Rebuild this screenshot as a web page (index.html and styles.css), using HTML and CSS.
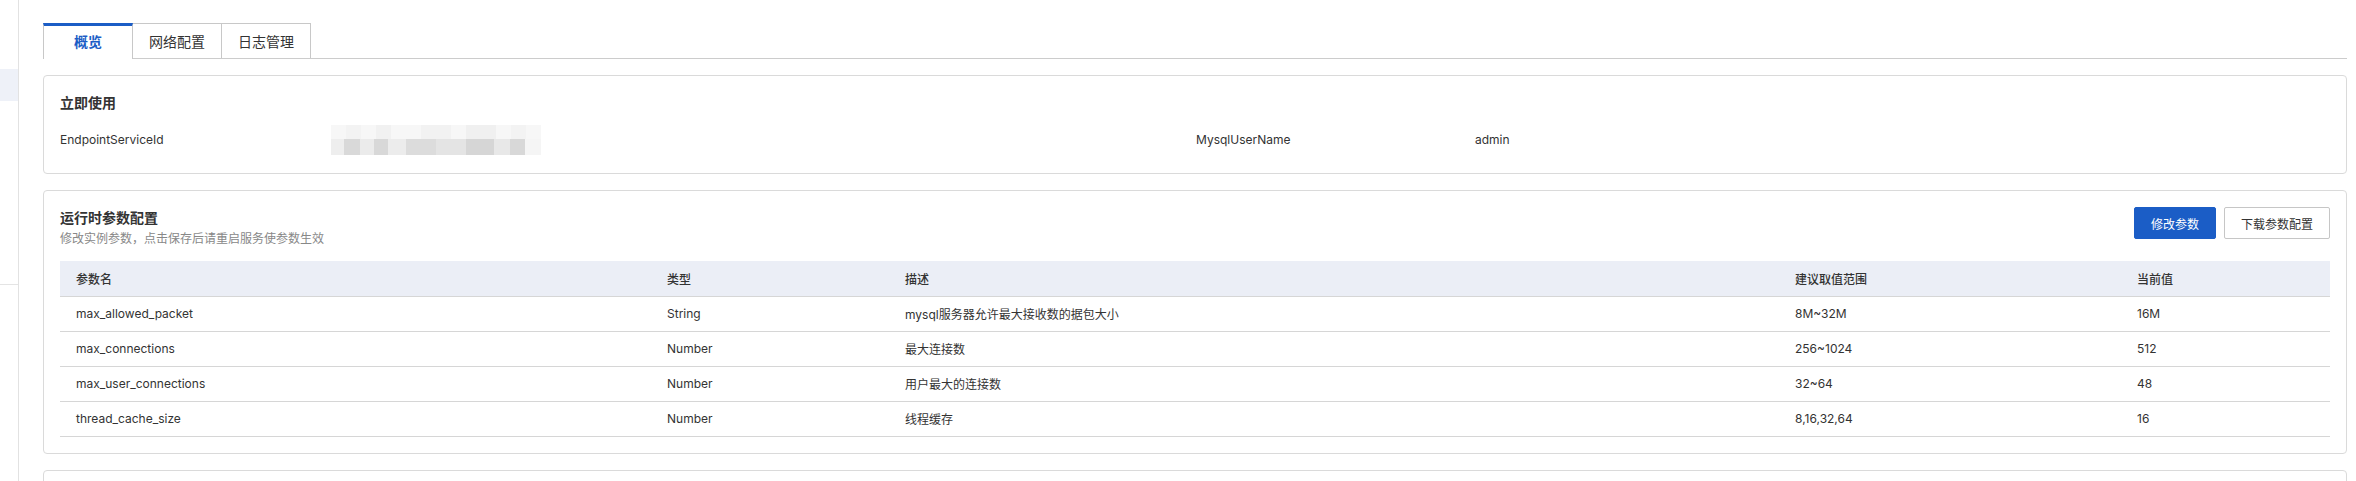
FILE: index.html
```html
<!DOCTYPE html>
<html lang="zh-CN">
<head>
<meta charset="utf-8">
<title>实例详情</title>
<link rel="stylesheet" href="styles.css">
</head>
<body>
<div class="layout">
  <aside class="sidebar">
    <div class="side-active"></div>
    <div class="side-divider"></div>
  </aside>
  <main class="main">
    <nav class="tabs">
      <div class="tab tab-active">概览</div>
      <div class="tab">网络配置</div>
      <div class="tab">日志管理</div>
    </nav>

    <section class="card">
      <h3 class="card-title">立即使用</h3>
      <div class="info-grid">
        <div class="info-label">EndpointServiceId</div>
        <div class="info-value">
          <svg class="masked" width="210" height="30" viewBox="0 0 210 30" aria-hidden="true">
            <rect x="0" y="0" width="210" height="14" fill="#f7f7f7"/>
            <rect x="15" y="0" width="15" height="14" fill="#f3f3f3"/>
            <rect x="45" y="0" width="15" height="14" fill="#f1f1f1"/>
            <rect x="90" y="0" width="30" height="14" fill="#f2f2f2"/>
            <rect x="135" y="0" width="30" height="14" fill="#f0f0f0"/>
            <rect x="180" y="0" width="15" height="14" fill="#f3f3f3"/>
            <rect x="0" y="14" width="210" height="16" fill="#eeeeee"/>
            <rect x="13" y="14" width="16" height="16" fill="#d9d9d9"/>
            <rect x="29" y="14" width="14" height="16" fill="#ebebeb"/>
            <rect x="43" y="14" width="14" height="16" fill="#d8d8d8"/>
            <rect x="57" y="14" width="18" height="16" fill="#ececec"/>
            <rect x="75" y="14" width="30" height="16" fill="#dcdcdc"/>
            <rect x="105" y="14" width="30" height="16" fill="#e4e4e4"/>
            <rect x="135" y="14" width="28" height="16" fill="#d6d6d6"/>
            <rect x="163" y="14" width="16" height="16" fill="#e8e8e8"/>
            <rect x="179" y="14" width="15" height="16" fill="#d8d8d8"/>
            <rect x="194" y="14" width="16" height="16" fill="#f5f5f5"/>
          </svg>
        </div>
        <div class="info-label">MysqlUserName</div>
        <div class="info-value">admin</div>
      </div>
    </section>

    <section class="card">
      <div class="card-head">
        <div>
          <h3 class="card-title">运行时参数配置</h3>
          <p class="card-desc">修改实例参数，点击保存后请重启服务使参数生效</p>
        </div>
        <div class="actions">
          <button class="btn btn-primary">修改参数</button>
          <button class="btn">下载参数配置</button>
        </div>
      </div>
      <table class="params">
        <colgroup>
          <col class="c1"><col class="c2"><col class="c3"><col class="c4"><col class="c5">
        </colgroup>
        <thead>
          <tr><th>参数名</th><th>类型</th><th>描述</th><th>建议取值范围</th><th>当前值</th></tr>
        </thead>
        <tbody>
          <tr><td>max_allowed_packet</td><td>String</td><td>mysql服务器允许最大接收数的据包大小</td><td>8M~32M</td><td>16M</td></tr>
          <tr><td>max_connections</td><td>Number</td><td>最大连接数</td><td>256~1024</td><td>512</td></tr>
          <tr><td>max_user_connections</td><td>Number</td><td>用户最大的连接数</td><td>32~64</td><td>48</td></tr>
          <tr><td>thread_cache_size</td><td>Number</td><td>线程缓存</td><td>8,16,32,64</td><td>16</td></tr>
        </tbody>
      </table>
    </section>

    <section class="card card-empty"></section>
  </main>
</div>
</body>
</html>
```

FILE: styles.css
```css
* { box-sizing: border-box; }

html, body {
  margin: 0;
  padding: 0;
  background: #ffffff;
}

body {
  font-family: Inter, "Noto Sans CJK SC", sans-serif;
  font-size: 12px;
  color: #333333;
}

.layout {
  display: flex;
  min-height: 100vh;
}

.sidebar {
  width: 19px;
  flex: none;
  border-right: 1px solid #e2e2e2;
  padding-top: 69px;
}

.side-active {
  height: 32px;
  background: #eef1f8;
}

.side-divider {
  margin-top: 183px;
  height: 1px;
  background: #e4e4e4;
}

.main {
  flex: 1;
  padding: 23px 9px 0 24px;
}

/* tabs */
.tabs {
  display: flex;
  height: 36px;
  border-bottom: 1px solid #cccccc;
}

.tab {
  width: 90px;
  height: 35px;
  margin-left: -1px;
  padding-top: 2px;
  border: 1px solid #c8c8c8;
  border-bottom: none;
  background: #ffffff;
  font-size: 14px;
  line-height: 31px;
  text-align: center;
  color: #333333;
}

.tab:first-child { margin-left: 0; }

.tab-active {
  height: 36px;
  margin-bottom: -1px;
  padding-top: 0;
  border-top: 3px solid #1b5dc6;
  color: #1b5dc6;
  font-weight: 600;
  position: relative;
}

/* cards */
.card {
  margin-top: 16px;
  border: 1px solid #dadada;
  border-radius: 4px;
  padding: 16px;
  background: #ffffff;
}

.card-title {
  margin: 0;
  font-size: 14px;
  line-height: 22px;
  font-weight: 600;
  color: #333333;
}

.info-grid {
  display: grid;
  grid-template-columns: 271px 865px 279px 1fr;
  margin-top: 8px;
  height: 35px;
  align-items: center;
}

.info-label,
.info-value {
  font-size: 12px;
  line-height: 20px;
  color: #333333;
}

.masked {
  display: block;
}

.card-head {
  display: flex;
  justify-content: space-between;
  align-items: flex-start;
}

.card-desc {
  margin: 0;
  font-size: 12px;
  line-height: 20px;
  color: #888888;
}

.actions {
  display: flex;
  gap: 8px;
}

.btn {
  height: 32px;
  padding: 0 16px;
  border: 1px solid #c6c6c6;
  border-radius: 2px;
  background: #ffffff;
  font-family: inherit;
  font-size: 12px;
  color: #333333;
  cursor: pointer;
}

.btn-primary {
  background: #1b5dc6;
  border-color: #1b5dc6;
  color: #ffffff;
}

/* table */
.params {
  width: 100%;
  margin-top: 12px;
  border-collapse: collapse;
  table-layout: fixed;
}

.c1 { width: 591px; }
.c2 { width: 238px; }
.c3 { width: 890px; }
.c4 { width: 342px; }
.c5 { width: auto; }

.params th,
.params td {
  height: 35px;
  padding: 0 16px;
  text-align: left;
  font-size: 12px;
  color: #333333;
  border-bottom: 1px solid #d6d6d6;
  white-space: nowrap;
}

.params th {
  background: #ebeef6;
  font-weight: 500;
}

.card-empty {
  height: 120px;
}
```
